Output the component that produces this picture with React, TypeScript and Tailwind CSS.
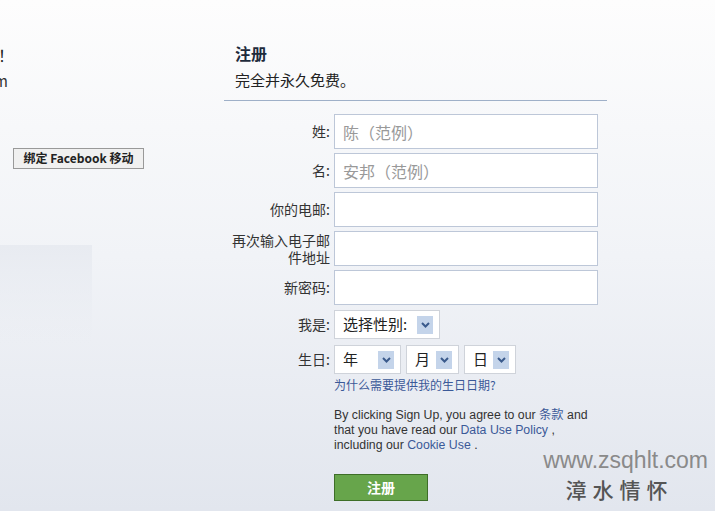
import React from "react";

const cjk = { fontFamily: '"Noto Sans CJK SC", "Liberation Sans", sans-serif' };

function Arrow() {
  return (
    <span className="flex h-[18px] w-[16px] items-center justify-center bg-[#c4d4ea]">
      <svg width="9" height="6" viewBox="0 0 9 6">
        <path d="M1 1 L4.5 4.5 L8 1" fill="none" stroke="#3a5a8c" strokeWidth="2" />
      </svg>
    </span>
  );
}

function Select({ text, width }: { text: string; width: string }) {
  return (
    <div className={`flex h-[29px] items-center justify-between border border-[#cfd3da] bg-white pl-[8px] pr-[6px] text-[15px] text-[#222] ${width}`}>
      <span>{text}</span>
      <Arrow />
    </div>
  );
}

function Row({ label, placeholder }: { label: string; placeholder?: string }) {
  return (
    <div className="flex items-center">
      <div className="ml-[5px] w-[101px] text-right text-[14px] leading-[17px] text-[#333]">{label}</div>
      <div className="ml-[4px] flex h-[35px] w-[264px] items-center border border-[#bdc7d8] bg-white pl-[8px] text-[16px] text-[#999]">
        {placeholder}
      </div>
    </div>
  );
}

export default function App() {
  return (
    <div
      className="relative h-[511px] w-[715px] overflow-hidden bg-gradient-to-b from-[#fdfdfd] via-[#f1f3f7] to-[#e2e6ee]"
      style={cjk}
    >
      <div className="flex">
        {/* left column */}
        <div className="w-[224px] pt-[45px]">
          <div className="flex w-[14px] justify-end whitespace-nowrap text-[16px] leading-[20px] text-[#222]">
            欢迎来到 Facebook 移动版！
          </div>
          <div className="mt-[6px] flex w-[14px] justify-end whitespace-nowrap pr-[6px] text-[15px] leading-[20px] text-[#333]">
            在手机上访问 m.facebook.com
          </div>
          <div className="mt-[53px] pl-[13px]">
            <button className="h-[21px] w-[131px] border border-[#999] bg-[#f0f0f0] text-[12px] font-bold text-[#222]">
              绑定 Facebook 移动
            </button>
          </div>
          <div className="mt-[76px] h-[100px] w-[92px] bg-gradient-to-b from-[#e8ebf1] to-transparent" />
        </div>

        {/* right column */}
        <div className="w-[383px] pt-[42px]">
          <div className="pl-[11px]">
            <div className="text-[16px] font-bold leading-[22px] text-[#1e2b3c]">注册</div>
            <div className="mt-[6px] text-[15px] leading-[20px] text-[#222]">完全并永久免费。</div>
          </div>
          <div className="mt-[10px] h-px bg-[#9fb0c8]" />

          <div className="mt-[13px] flex flex-col gap-[4px]">
            <Row label="姓:" placeholder="陈（范例）" />
            <Row label="名:" placeholder="安邦（范例）" />
            <Row label="你的电邮:" />
            <Row label="再次输入电子邮件地址" />
            <Row label="新密码:" />
          </div>

          <div className="mt-[5px] flex items-center">
            <div className="ml-[5px] w-[101px] text-right text-[14px] text-[#333]">我是:</div>
            <div className="ml-[4px]">
              <Select text="选择性别:" width="w-[106px]" />
            </div>
          </div>

          <div className="mt-[6px] flex items-center">
            <div className="ml-[5px] w-[101px] text-right text-[14px] text-[#333]">生日:</div>
            <div className="ml-[4px] flex gap-[5px]">
              <Select text="年" width="w-[67px]" />
              <Select text="月" width="w-[53px]" />
              <Select text="日" width="w-[52px]" />
            </div>
          </div>

          <div className="ml-[110px] mt-[3px] text-[12px] leading-[16px] text-[#3b5998]">为什么需要提供我的生日日期?</div>

          <div
            className="ml-[110px] mt-[15px] w-[262px] text-[12.3px] leading-[15px] text-[#333]"
            style={{ fontFamily: '"Liberation Sans", "Noto Sans CJK SC", sans-serif' }}
          >
            By clicking Sign Up, you agree to our <span className="text-[#3b5998]">条款</span> and that you have read our{" "}
            <span className="text-[#3b5998]">Data Use Policy</span> , including our{" "}
            <span className="text-[#3b5998]">Cookie Use</span> .
          </div>

          <div className="ml-[110px] mt-[21px]">
            <button className="h-[27px] w-[94px] border border-[#3e6e28] bg-[#67a54b] text-[14px] font-bold text-white">
              注册
            </button>
          </div>
          <div className="mt-[11px] h-px bg-[#9aa6b8]" />
        </div>
      </div>

      {/* watermark */}
      <div className="absolute right-[7px] top-[449px] flex flex-col items-center">
        <div className="text-[23px] leading-[22px] text-[#8a8a8a]" style={{ fontFamily: '"Liberation Sans", sans-serif' }}>
          www.zsqhlt.com
        </div>
        <div className="mr-[12px] mt-[6px] text-[21px] font-medium leading-[24px] tracking-[6px] text-[#555]" style={{ fontFamily: '"Noto Sans CJK SC", serif' }}>
          漳水情怀
        </div>
      </div>
    </div>
  );
}
